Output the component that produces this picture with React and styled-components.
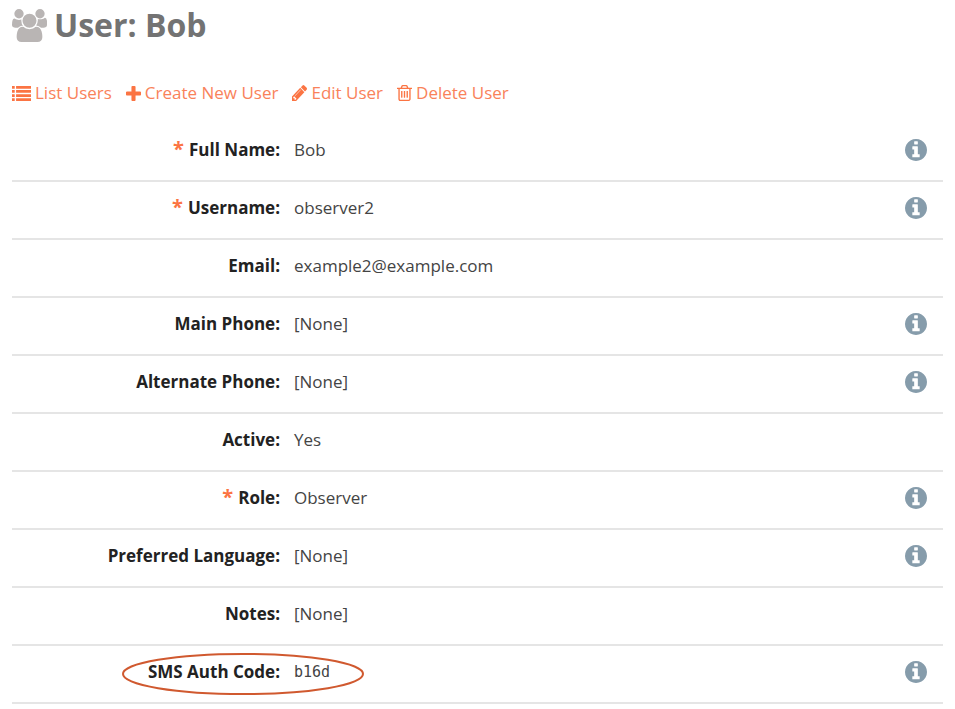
import React from "react";
import styled, { createGlobalStyle } from "styled-components";

const GlobalStyle = createGlobalStyle`
  *, *::before, *::after { box-sizing: border-box; }
  body {
    margin: 0;
    background: #fff;
    color: #444;
    font-family: "Open Sans", "Noto Sans", sans-serif;
    font-size: 17px;
    line-height: 24px;
  }
`;

const Page = styled.main`
  padding: 3px 12px 0;
`;

const Title = styled.h1`
  display: flex;
  align-items: center;
  gap: 7px;
  margin: 0;
  color: #737373;
  font-size: 32px;
  line-height: 44px;
  font-weight: 700;
`;

const Actions = styled.nav`
  display: flex;
  flex-wrap: wrap;
  gap: 14px;
  margin-top: 34px;
`;

const ActionLink = styled.a`
  display: inline-flex;
  align-items: center;
  gap: 4px;
  color: #f9825a;
  text-decoration: none;
`;

const Glyph = styled.svg`
  flex: none;
  width: ${(p) => p.$width}px;
  height: ${(p) => p.$height}px;
  fill: ${(p) => p.$color || "#fb7443"};
`;

const Fields = styled.dl`
  margin: 19px 0 0;
`;

const Field = styled.div`
  display: grid;
  grid-template-columns: 268px 1fr auto;
  column-gap: 14px;
  align-items: center;
  height: 58px;
  padding: 0 16px 4px 0;
  border-bottom: 2px solid #e5e5e5;
`;

const Label = styled.dt`
  position: relative;
  color: #222;
  font-weight: 700;
  text-align: right;
`;

const Required = styled.span`
  margin-right: 5px;
  color: #fb7443;
  font-size: 20px;
  line-height: 20px;
`;

const Value = styled.dd`
  margin: 0;
  font-family: ${(p) => (p.$code ? '"DejaVu Sans Mono", monospace' : "inherit")};
  font-size: ${(p) => (p.$code ? 15 : 17)}px;
`;

const HelpButton = styled.button`
  display: flex;
  padding: 0;
  border: 0;
  background: none;
  cursor: pointer;
`;

const Ring = styled.svg`
  position: absolute;
  left: 110px;
  top: -7px;
  width: 242px;
  height: 42px;
  fill: none;
  stroke: #d0592f;
  stroke-width: 2;
  pointer-events: none;
`;

const icons = {
  group: {
    box: "0 0 1920 1792",
    d: "M593 896q-162 5-265 128h-134q-82 0-138-40.5t-56-118.5q0-353 124-353 6 0 43.5 21t97.5 42.5 119 21.5q67 0 133-23-5 37-5 66 0 159 93 293zm1071 637q0 120-73 189.5t-194 69.5h-874q-121 0-194-69.5t-73-189.5q0-53 3.5-103.5t14-109 26.5-108.5 43-97.5 62-81 85.5-53.5 111.5-20q10 0 43 21.5t73 48 107 48 135 21.5 135-21.5 107-48 73-48 43-21.5q61 0 111.5 20t85.5 53.5 62 81 43 97.5 26.5 108.5 14 109 3.5 103.5zm-1024-1277q0 106-75 181t-181 75-181-75-75-181 75-181 181-75 181 75 75 181zm704 384q0 159-112.5 271.5t-271.5 112.5-271.5-112.5-112.5-271.5 112.5-271.5 271.5-112.5 271.5 112.5 112.5 271.5zm576 225q0 78-56 118.5t-138 40.5h-134q-103-123-265-128 93-134 93-293 0-29-5-66 66 23 133 23 59 0 119-21.5t97.5-42.5 43.5-21q124 0 124 353zm-128-609q0 106-75 181t-181 75-181-75-75-181 75-181 181-75 181 75 75 181z",
  },
  list: {
    box: "0 128 1792 1408",
    d: "M0 128h256v256h-256zM384 128h1408v256h-1408zM0 512h256v256h-256zM384 512h1408v256h-1408zM0 896h256v256h-256zM384 896h1408v256h-1408zM0 1280h256v256h-256zM384 1280h1408v256h-1408z",
  },
  plus: {
    box: "192 128 1408 1408",
    d: "M1600 736v192q0 40-28 68t-68 28h-416v416q0 40-28 68t-68 28h-192q-40 0-68-28t-28-68v-416h-416q-40 0-68-28t-28-68v-192q0-40 28-68t68-28h416v-416q0-40 28-68t68-28h192q40 0 68 28t28 68v416h416q40 0 68 28t28 68z",
  },
  pencil: {
    box: "128 149 1515 1515",
    d: "M491 1536l91-91-235-235-91 91v107h128v128h107zm523-928q0-22-22-22-10 0-17 7l-542 542q-7 7-7 17 0 22 22 22 10 0 17-7l542-542q7-7 7-17zm-54-192l416 416-832 832h-416v-416zm683 96q0 53-37 90l-166 166-416-416 166-165q36-38 90-38 53 0 91 38l235 234q37 39 37 91z",
  },
  trash: {
    box: "192 128 1408 1536",
    d: "M704 736v576q0 14-9 23t-23 9h-64q-14 0-23-9t-9-23v-576q0-14 9-23t23-9h64q14 0 23 9t9 23zm256 0v576q0 14-9 23t-23 9h-64q-14 0-23-9t-9-23v-576q0-14 9-23t23-9h64q14 0 23 9t9 23zm256 0v576q0 14-9 23t-23 9h-64q-14 0-23-9t-9-23v-576q0-14 9-23t23-9h64q14 0 23 9t9 23zm128 724v-948h-896v948q0 22 7 40.5t14.5 27 10.5 8.5h832q3 0 10.5-8.5t14.5-27 7-40.5zm-672-1076h448l-48-117q-7-9-17-11h-317q-10 2-17 11zm928 32v64q0 14-9 23t-23 9h-96v948q0 83-47 143.5t-113 60.5h-832q-66 0-113-58.5t-47-141.5v-952h-96q-14 0-23-9t-9-23v-64q0-14 9-23t23-9h309l70-167q15-37 54-63t79-26h320q40 0 79 26t54 63l70 167h309q14 0 23 9t9 23z",
  },
  info: {
    box: "128 128 1536 1536",
    d: "M1152 1376v-160q0-14-9-23t-23-9h-96v-512q0-14-9-23t-23-9h-320q-14 0-23 9t-9 23v160q0 14 9 23t23 9h96v320h-96q-14 0-23 9t-9 23v160q0 14 9 23t23 9h448q14 0 23-9t9-23zm-128-896v-160q0-14-9-23t-23-9h-192q-14 0-23 9t-9 23v160q0 14 9 23t23 9h192q14 0 23-9t9-23zm640 416q0 209-103 385.5t-279.5 279.5-385.5 103-385.5-103-279.5-279.5-103-385.5 103-385.5 279.5-279.5 385.5-103 385.5 103 279.5 279.5 103 385.5z",
  },
};

function Icon({ name, width, height, color }) {
  const { box, d } = icons[name];
  return (
    <Glyph viewBox={box} preserveAspectRatio="none" $width={width} $height={height} $color={color} aria-hidden="true">
      <path d={d} />
    </Glyph>
  );
}

const actions = [
  { icon: "list", width: 19, height: 15, text: "List Users" },
  { icon: "plus", width: 15, height: 15, text: "Create New User" },
  { icon: "pencil", width: 15, height: 16, text: "Edit User" },
  { icon: "trash", width: 15, height: 16, text: "Delete User" },
];

const fields = [
  { label: "Full Name", value: "Bob", required: true, help: true },
  { label: "Username", value: "observer2", required: true, help: true },
  { label: "Email", value: "example2@example.com" },
  { label: "Main Phone", value: "[None]", help: true },
  { label: "Alternate Phone", value: "[None]", help: true },
  { label: "Active", value: "Yes" },
  { label: "Role", value: "Observer", required: true, help: true },
  { label: "Preferred Language", value: "[None]", help: true },
  { label: "Notes", value: "[None]" },
  { label: "SMS Auth Code", value: "b16d", code: true, ringed: true, help: true },
];

export default function App() {
  return (
    <Page>
      <GlobalStyle />
      <Title>
        <Icon name="group" width={35} height={33} color="#b9b5b4" />
        User: Bob
      </Title>
      <Actions aria-label="User actions">
        {actions.map((a) => (
          <ActionLink key={a.text} href="#">
            <Icon name={a.icon} width={a.width} height={a.height} />
            {a.text}
          </ActionLink>
        ))}
      </Actions>
      <Fields>
        {fields.map((f) => (
          <Field key={f.label}>
            <Label>
              {f.required && <Required>*</Required>}
              {f.label}:
              {f.ringed && (
                <Ring viewBox="0 0 242 42" aria-hidden="true">
                  <ellipse cx="121" cy="21" rx="120" ry="20" />
                </Ring>
              )}
            </Label>
            <Value $code={f.code}>{f.value}</Value>
            {f.help && (
              <HelpButton type="button" aria-label={`About ${f.label}`}>
                <Icon name="info" width={22} height={22} color="#869cab" />
              </HelpButton>
            )}
          </Field>
        ))}
      </Fields>
    </Page>
  );
}
